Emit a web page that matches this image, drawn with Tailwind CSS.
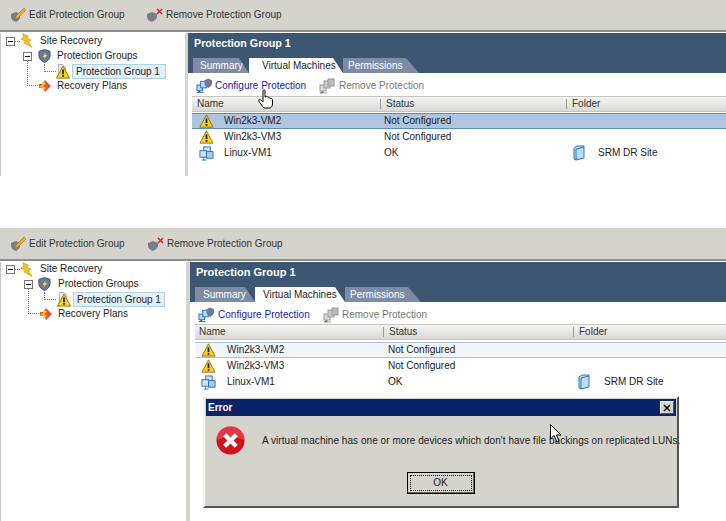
<!DOCTYPE html>
<html><head><meta charset="utf-8"><script src="https://cdn.jsdelivr.net/npm/@tailwindcss/browser@4"></script></head>
<body class="bg-white">
<svg class="absolute w-0 h-0"><defs>
<symbol id="warn" viewBox="0 0 16 16"><path d="M8 1 15.500 15H.5Z" fill="#fcd116" stroke="#8a6a10"/><path d="M8 5v5.500" stroke="#222" stroke-width="2"/><rect x="7" y="11.500" width="2" height="2" fill="#222"/></symbol>
<symbol id="page" viewBox="0 0 8 10"><path d="M.5.5H5L7.500 3V9.500H.5Z" fill="#f4f4f8" stroke="#b0b0c0"/></symbol>
<symbol id="bolt" viewBox="0 0 14 16"><path d="M3 0 9 3 7 5 12 7 9 9 13 15 4 10 6 8 1 6 4 4Z" fill="#f5c518" stroke="#b08a10" stroke-width=".6"/></symbol>
<symbol id="shield" viewBox="0 0 14 14"><path d="M1 2 7 0 13 2V7C13 10 10 13 7 14 4 13 1 10 1 7Z" fill="#6a7a9c" stroke="#46506e"/><path d="M8 3 5 8H7L6 11 10 6H8Z" fill="#f5d040"/></symbol>
<symbol id="plan" viewBox="0 0 14 14"><path d="M7 1 13 7 7 13 5 9H1V5H5Z" fill="#e2504c"/><path d="M5 2 8 5 5 7 8 9 4 12 5 9 1 8 4 6Z" fill="#f5c518"/></symbol>
<symbol id="vm" viewBox="0 0 16 16"><rect x="5" y="1" width="7" height="8" fill="#cfe3f8" stroke="#2a6cb4"/><rect x="1" y="5" width="7" height="7" fill="#cfe3f8" stroke="#2a6cb4"/><rect x="8" y="6" width="7" height="7" fill="#a8cdf0" stroke="#2a6cb4"/><path d="M5 12v3M3 15h5" stroke="#2a6cb4"/></symbol>
<symbol id="folder" viewBox="0 0 12 16"><path d="M1 3 4 1 11 1 11 13 3 15 1 14Z" fill="#bcdcf4" stroke="#2a78b8"/><path d="M3 4 11 2M3 4V15" stroke="#2a78b8" fill="none"/></symbol>
<symbol id="edit" viewBox="0 0 16 14"><path d="M1 6 6 4 10 6V9C10 11 8 13 6 14 3 13 1 11 1 9Z" fill="#767e88"/><path d="M6 8 14 0 16 2 8 10 5 11Z" fill="#f0a830" stroke="#a06a10" stroke-width=".5"/></symbol>
<symbol id="rem" viewBox="0 0 16 14"><path d="M0 6 5 4 10 6V9C10 11 7 13 5 14 2 13 0 11 0 9Z" fill="#767e88"/><path d="M10 1 15 6M15 1 10 6" stroke="#d8261c" stroke-width="1.500"/></symbol>
<symbol id="cfg" viewBox="0 0 17 16"><rect x="1" y="7" width="6" height="6" fill="#bcd8f4" stroke="#2a6cb4"/><rect x="5" y="3" width="6" height="7" fill="#bcd8f4" stroke="#2a6cb4"/><path d="M9 2 13 0 17 2V5C17 7 15 9 13 10 11 9 9 7 9 5Z" fill="#6a7a9c"/><path d="M4 13v2H1M4 15h4" stroke="#2a6cb4"/></symbol>
<symbol id="cfgoff" viewBox="0 0 16 16"><rect x="1" y="7" width="6" height="6" fill="#ddd" stroke="#999"/><rect x="5" y="3" width="6" height="7" fill="#ccc" stroke="#999"/><rect x="9" y="1" width="6" height="7" fill="#bbb" stroke="#999"/><path d="M4 13v2H1M4 15h4" stroke="#999"/></symbol>
<symbol id="hand" viewBox="0 0 16 20"><path d="M5 1.500C5 .5 7 .5 7 1.500V8L8 7.500C9 7 10 8 10 8.500 11 8 12 8.500 12 9.500 13 9 14.500 10 14.500 11V15C14.500 17 13 19 12 19H6C5 18 2 14 .8 12 .5 10.500 2 10 3 11L5 13Z" fill="#fff" stroke="#000"/></symbol>
<symbol id="arrow" viewBox="0 0 12 19"><path d="M.5.5V15L4 11.500 7 18 9 17 6.500 11H11Z" fill="#fff" stroke="#000"/></symbol>
</defs></svg>

<div class="relative w-[726px] h-[521px] overflow-hidden font-['Liberation_Sans',sans-serif] text-[10px] leading-none text-[#222]">

<!-- panel one -->
<section class="h-[176px]">
  <div class="h-[30px] bg-[#d4d4cc] flex items-center pl-[10px] text-[#333]">
    <svg class="w-4 h-[14px]"><use href="#edit"/></svg><span class="ml-[3px] w-[118px]">Edit Protection Group</span>
    <svg class="w-4 h-[14px]"><use href="#rem"/></svg><span class="ml-[3px]">Remove Protection Group</span>
  </div>
  <div class="h-[3px] bg-white border-t-2 border-[#8c8c88]"></div>
  <div class="flex h-[143px]">
    <div class="relative w-[185px] border-l border-[#c8c8c0]">
      <div class="absolute left-[5px] top-[4px] w-[9px] h-[9px] border border-[#777] bg-white flex items-center justify-center"><i class="block w-[5px] h-px bg-black"></i></div>
      <div class="absolute left-[14px] top-[8px] w-[5px] border-t border-dotted border-[#777]"></div>
      <svg class="absolute left-[19px] top-0 w-[13px] h-4"><use href="#bolt"/></svg>
      <span class="absolute left-[39px] top-[3px]">Site Recovery</span>
      <div class="absolute left-[22px] top-[19px] w-[9px] h-[9px] border border-[#777] bg-white flex items-center justify-center"><i class="block w-[5px] h-px bg-black"></i></div>
      <svg class="absolute left-[37px] top-[16px] w-[13px] h-[14px]"><use href="#shield"/></svg>
      <span class="absolute left-[56px] top-[18px]">Protection Groups</span>
      <div class="absolute left-[43px] top-[31px] w-[12px] h-[8px] border-l border-b border-dotted border-[#777]"></div>
      <svg class="absolute left-[57px] top-[31px] w-[8px] h-[10px]"><use href="#page"/></svg>
      <svg class="absolute left-[55px] top-[32px] w-[14px] h-[14px]"><use href="#warn"/></svg>
      <span class="absolute left-[71px] top-[31px] w-[94px] h-[15px] pl-[3px] flex items-center bg-[#e4f0f8] border border-[#b0d0e4] whitespace-nowrap">Protection Group 1</span>
      <div class="absolute left-[26px] top-[28px] w-[11px] h-[25px] border-l border-b border-dotted border-[#777]"></div>
      <svg class="absolute left-[37px] top-[46px] w-[14px] h-[14px]"><use href="#plan"/></svg>
      <span class="absolute left-[56px] top-[48px]">Recovery Plans</span>
    </div>
    <div class="w-[3px] bg-[#d4d4cc]"></div>
    <div class="flex-1 min-w-0">
      <div class="h-10 bg-[#3d5671] flex flex-col justify-between pl-[1px]">
        <h2 class="pl-[5px] pt-[5px] font-bold text-white text-[10.7px]">Protection Group 1</h2>
        <div class="flex h-[15px] pl-[4px] items-end">
          <span class="w-[56px] h-[15px] pl-[7px] flex items-center bg-[#7d8ca3] text-white [clip-path:polygon(0_0,46px_0,56px_100%,0_100%)]">Summary</span>
          <span class="w-[94px] h-[15px] pl-[13px] flex items-center bg-white whitespace-nowrap [clip-path:polygon(0_0,84px_0,94px_100%,0_100%)]">Virtual Machines</span>
          <span class="w-[76px] h-[15px] pl-[5px] flex items-center bg-[#7d8ca3] text-white [clip-path:polygon(0_0,63px_0,76px_100%,0_100%)]">Permissions</span>
        </div>
      </div>
      <div class="h-[23px] flex items-center pl-2 pt-[3px]">
        <svg class="w-4 h-4"><use href="#cfg"/></svg><span class="ml-[3px] w-[104px] text-[#1a1ab0]">Configure Protection</span>
        <svg class="w-4 h-4"><use href="#cfgoff"/></svg><span class="ml-[4px] text-[#777]">Remove Protection</span>
      </div>
      <div class="ml-[4px] grid grid-cols-[188px_186px_1fr] h-[16px] bg-gradient-to-b from-[#f4f4f2] to-[#d8d8d4] border-y border-[#c4c4c0] items-center text-[#333]">
        <span class="pl-[5px]">Name</span><span class="pl-[5px] border-l border-[#999]">Status</span><span class="pl-[5px] border-l border-[#999]">Folder</span>
      </div>
      <div class="ml-[4px] mt-[1px] grid grid-cols-[188px_186px_1fr] h-[16px] bg-[#b0c6e0] border-y border-[#5a8cbc] items-center">
        <span class="flex items-center pl-[7px]"><svg class="w-[15px] h-[14px] mr-[10px]"><use href="#warn"/></svg>Win2k3-VM2</span><span class="pl-[4px]">Not Configured</span><span></span>
      </div>
      <div class="ml-[4px] grid grid-cols-[188px_186px_1fr] h-[16px] items-center">
        <span class="flex items-center pl-[7px]"><svg class="w-[15px] h-[14px] mr-[10px]"><use href="#warn"/></svg>Win2k3-VM3</span><span class="pl-[4px]">Not Configured</span><span></span>
      </div>
      <div class="ml-[4px] grid grid-cols-[188px_186px_1fr] h-[16px] items-center">
        <span class="flex items-center pl-[7px]"><svg class="w-[15px] h-[15px] mr-[10px]"><use href="#vm"/></svg>Linux-VM1</span><span class="pl-[4px]">OK</span>
        <span class="flex items-center pl-[7px]"><svg class="w-3 h-4 mr-[13px]"><use href="#folder"/></svg>SRM DR Site</span>
      </div>
    </div>
  </div>
</section>

<div class="h-[52px]"></div>

<!-- panel two -->
<section class="h-[293px]">
  <div class="h-[31px] bg-[#d4d4cc] flex items-center pl-[10px] text-[#333]">
    <svg class="w-4 h-[14px]"><use href="#edit"/></svg><span class="ml-[3px] w-[119px]">Edit Protection Group</span>
    <svg class="w-4 h-[14px]"><use href="#rem"/></svg><span class="ml-[3px]">Remove Protection Group</span>
  </div>
  <div class="h-[3px] bg-white border-t-2 border-[#8c8c88]"></div>
  <div class="flex h-[259px]">
    <div class="relative w-[186px] border-l border-[#c8c8c0]">
      <div class="absolute left-[5px] top-[3px] w-[9px] h-[9px] border border-[#777] bg-white flex items-center justify-center"><i class="block w-[5px] h-px bg-black"></i></div>
      <div class="absolute left-[14px] top-[7px] w-[5px] border-t border-dotted border-[#777]"></div>
      <svg class="absolute left-[19px] top-0 w-[13px] h-4"><use href="#bolt"/></svg>
      <span class="absolute left-[39px] top-[2px]">Site Recovery</span>
      <div class="absolute left-[23px] top-[18px] w-[9px] h-[9px] border border-[#777] bg-white flex items-center justify-center"><i class="block w-[5px] h-px bg-black"></i></div>
      <svg class="absolute left-[37px] top-[15px] w-[13px] h-[14px]"><use href="#shield"/></svg>
      <span class="absolute left-[57px] top-[17px]">Protection Groups</span>
      <div class="absolute left-[43px] top-[30px] w-[12px] h-[8px] border-l border-b border-dotted border-[#777]"></div>
      <svg class="absolute left-[58px] top-[30px] w-[8px] h-[10px]"><use href="#page"/></svg>
      <svg class="absolute left-[56px] top-[31px] w-[14px] h-[14px]"><use href="#warn"/></svg>
      <span class="absolute left-[72px] top-[30px] w-[92px] h-[15px] pl-[3px] flex items-center bg-[#e4f0f8] border border-[#b0d0e4] whitespace-nowrap">Protection Group 1</span>
      <div class="absolute left-[27px] top-[27px] w-[11px] h-[25px] border-l border-b border-dotted border-[#777]"></div>
      <svg class="absolute left-[38px] top-[45px] w-[14px] h-[14px]"><use href="#plan"/></svg>
      <span class="absolute left-[57px] top-[47px]">Recovery Plans</span>
    </div>
    <div class="w-[4px] bg-[#d4d4cc]"></div>
    <div class="flex-1 min-w-0">
      <div class="h-10 bg-[#3d5671] flex flex-col justify-between">
        <h2 class="pl-[6px] pt-[5px] font-bold text-white text-[11px]">Protection Group 1</h2>
        <div class="flex h-[15px] pl-[5px] items-end">
          <span class="w-[60px] h-[15px] pl-[8px] flex items-center bg-[#7d8ca3] text-white [clip-path:polygon(0_0,50px_0,60px_100%,0_100%)]">Summary</span>
          <span class="w-[90px] h-[15px] pl-[8px] flex items-center bg-white whitespace-nowrap [clip-path:polygon(0_0,80px_0,90px_100%,0_100%)]">Virtual Machines</span>
          <span class="w-[76px] h-[15px] pl-[5px] flex items-center bg-[#7d8ca3] text-white [clip-path:polygon(0_0,63px_0,76px_100%,0_100%)]">Permissions</span>
        </div>
      </div>
      <div class="h-[22px] flex items-center pl-2 pt-[3px]">
        <svg class="w-4 h-4"><use href="#cfg"/></svg><span class="ml-[4px] w-[105px] text-[#1a1ab0] tracking-[0.03px]">Configure Protection</span>
        <svg class="w-4 h-4"><use href="#cfgoff"/></svg><span class="ml-[3px] text-[#777]">Remove Protection</span>
      </div>
      <div class="ml-[5px] grid grid-cols-[188px_190px_1fr] h-[16px] bg-gradient-to-b from-[#f4f4f2] to-[#d8d8d4] border-y border-[#c4c4c0] items-center text-[#333]">
        <span class="pl-[4px]">Name</span><span class="pl-[5px] border-l border-[#999]">Status</span><span class="pl-[5px] border-l border-[#999]">Folder</span>
      </div>
      <div class="ml-[5px] mt-[2px] grid grid-cols-[188px_190px_1fr] h-[16px] bg-[#f0f5fa] border-y border-[#a8c4dc] items-center">
        <span class="flex items-center pl-[6px]"><svg class="w-[15px] h-[14px] mr-[11px]"><use href="#warn"/></svg>Win2k3-VM2</span><span class="pl-[5px]">Not Configured</span><span></span>
      </div>
      <div class="ml-[5px] grid grid-cols-[188px_190px_1fr] h-[16px] items-center">
        <span class="flex items-center pl-[6px]"><svg class="w-[15px] h-[14px] mr-[11px]"><use href="#warn"/></svg>Win2k3-VM3</span><span class="pl-[5px]">Not Configured</span><span></span>
      </div>
      <div class="ml-[5px] grid grid-cols-[188px_190px_1fr] h-[16px] items-center">
        <span class="flex items-center pl-[6px]"><svg class="w-[15px] h-[15px] mr-[11px]"><use href="#vm"/></svg>Linux-VM1</span><span class="pl-[5px]">OK</span>
        <span class="flex items-center pl-[5px]"><svg class="w-3 h-4 mr-[14px]"><use href="#folder"/></svg>SRM DR Site</span>
      </div>
    </div>
  </div>
</section>

<!-- error dialog -->
<div class="absolute left-[203px] top-[396px] w-[476px] h-[112px] bg-[#d4d4cc] border-2 border-t-[#f4f4f0] border-l-[#f4f4f0] border-r-[#555] border-b-[#555] p-px flex flex-col">
  <div class="h-[17px] bg-[#0a246a] flex items-center justify-between pl-[2px] pr-[2px] font-bold text-white shrink-0">
    <span>Error</span>
    <span class="w-[14px] h-[13px] bg-[#d4d4cc] border border-t-white border-l-white border-r-[#555] border-b-[#555] flex items-center justify-center"><svg class="w-2 h-2" viewBox="0 0 8 8"><path d="M1 1 7 7M7 1 1 7" stroke="#000" stroke-width="1.500"/></svg></span>
  </div>
  <div class="flex items-center pl-[10px] pt-[10px]">
    <svg class="w-[29px] h-[29px] shrink-0" viewBox="0 0 30 30"><circle cx="15" cy="15" r="14.500" fill="#d0121c"/><path d="M0 15A15 15 0 0 1 30 15C20 10 10 10 0 15Z" fill="#f0606a" opacity=".5"/><path d="M9 9 21 21M21 9 9 21" stroke="#fff" stroke-width="4.500"/></svg>
    <p class="ml-[17px] whitespace-nowrap text-[#222] tracking-[0.05px]">A virtual machine has one or more devices which don't have file backings on replicated LUNs.</p>
  </div>
  <button class="self-center ml-[-1px] mt-[17px] w-[68px] h-[22px] bg-[#d4d4cc] border border-black p-[2px] shadow-[inset_-1px_-1px_0_#666]"><span class="flex h-full items-center justify-center border border-dotted border-black">OK</span></button>
</div>

<svg class="absolute left-[258px] top-[89px] w-4 h-5"><use href="#hand"/></svg>
<svg class="absolute left-[550px] top-[424px] w-3 h-[19px]"><use href="#arrow"/></svg>
</div>
</body></html>
